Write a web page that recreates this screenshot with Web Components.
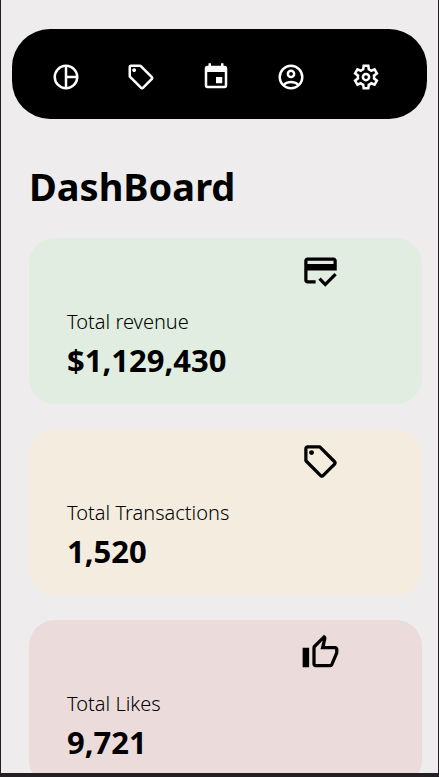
<!DOCTYPE html>
<html lang="en">
<head>
<meta charset="utf-8">
<meta name="viewport" content="width=device-width, initial-scale=1">
<title>DashBoard</title>
<style>
  html, body { margin: 0; height: 100%; }
  body { background: #231f24; color: #000; font-family: "Noto Sans", "Open Sans", sans-serif; overflow: hidden; }
</style>
</head>
<body>
<dash-app></dash-app>
<script>
const ICONS = {
  pie: '<path d="M12 2a10 10 0 1 0 0 20 10 10 0 0 0 0-20zm1 2.07A8 8 0 0 1 19.93 11H13V4.07zM4 12a8 8 0 0 1 7-7.93v15.86A8 8 0 0 1 4 12zm9 7.93V13h6.93A8 8 0 0 1 13 19.93z"/>',
  tag: '<g transform="translate(0 24) scale(.025)"><path d="M856-390 570-104q-12 12-27 18t-30 6q-15 0-30-6t-27-18L103-457q-11-11-17-25.5T80-513v-287q0-33 23.5-56.5T160-880h287q16 0 31 6.5t26 17.5l352 353q12 12 17.5 27t5.5 30q0 15-5.5 29.5T856-390ZM513-160l286-286-353-354H160v286l353 354ZM260-640q25 0 42.5-17.5T320-700q0-25-17.5-42.5T260-760q-25 0-42.5 17.5T200-700q0 25 17.5 42.5T260-640Z"/></g>',
  event: '<path d="M19 3h-1V1h-2v2H8V1H6v2H5c-1.1 0-2 .9-2 2v14c0 1.1.9 2 2 2h14c1.1 0 2-.9 2-2V5c0-1.1-.9-2-2-2zm0 16H5V8h14v11zM12 12h5v5h-5z"/>',
  account: '<g transform="translate(0 24) scale(.025)"><path d="M234-276q51-39 114-61.5T480-360q69 0 132 22.5T726-276q35-41 54.5-93T800-480q0-133-93.5-226.5T480-800q-133 0-226.5 93.5T160-480q0 59 19.5 111t54.5 93Zm246-164q-59 0-99.5-40.5T340-580q0-59 40.5-99.5T480-720q59 0 99.5 40.5T620-580q0 59-40.5 99.5T480-440Zm0 360q-83 0-156-31.5T197-197q-54-54-85.5-127T80-480q0-83 31.5-156T197-763q54-54 127-85.5T480-880q83 0 156 31.5T763-763q54 54 85.5 127T880-480q0 83-31.5 156T763-197q-54 54-127 85.5T480-80Zm0-80q53 0 100-15.5t86-44.5q-39-29-86-44.5T480-280q-53 0-100 15.5T294-220q39 29 86 44.5T480-160Zm0-360q26 0 43-17t17-43q0-26-17-43t-43-17q-26 0-43 17t-17 43q0 26 17 43t43 17Z"/></g>',
  settings: '<g transform="translate(0 24) scale(.025)"><path d="m370-80-16-128q-13-5-24.5-12T307-235l-119 50L78-375l103-78q-1-7-1-13.5v-27q0-6.5 1-13.5L78-585l110-190 119 50q11-8 23-15t24-12l16-128h220l16 128q13 5 24.5 12t22.5 15l119-50 110 190-103 78q1 7 1 13.5v27q0 6.5-2 13.5l103 78-110 190-118-50q-11 8-23 15t-24 12L590-80H370Zm70-80h79l14-106q31-8 57.5-23.5T639-327l99 41 39-68-86-65q5-14 7-29.5t2-31.5q0-16-2-31.5t-7-29.5l86-65-39-68-99 42q-22-23-48.5-38.5T533-694l-13-106h-79l-14 106q-31 8-57.5 23.5T321-633l-99-41-39 68 86 64q-5 15-7 30t-2 32q0 16 2 31t7 30l-86 65 39 68 99-42q22 23 48.5 38.5T427-266l13 106Z"/><circle cx="480" cy="-480" r="100" fill="none" stroke="currentColor" stroke-width="80"/></g>',
  credit: '<path d="M20 4H4c-1.11 0-1.99.89-1.99 2L2 18c0 1.11.89 2 2 2h5v-2H4v-6h18V6c0-1.11-.89-2-2-2zm0 4H4V6h16v2zm-5.07 11.17-2.83-2.83-1.41 1.41L14.93 22 22 14.93l-1.41-1.41-5.66 5.65z"/>',
  like: '<path d="M9 21h9c.83 0 1.54-.5 1.84-1.22l3.02-7.05c.09-.23.14-.47.14-.73v-2c0-1.1-.9-2-2-2h-6.31l.95-4.57.03-.32c0-.41-.17-.79-.44-1.06L14.17 1 7.58 7.59C7.22 7.95 7 8.45 7 9v10c0 1.1.9 2 2 2zM9 9l4.34-4.34L12 10h9v2l-3 7H9V9zM1 9h4v12H1z"/>'
};

class DashElement extends HTMLElement {
  connectedCallback() {
    if (!this.shadowRoot) this.attachShadow({ mode: "open" }).innerHTML = this.render();
  }
}

customElements.define("dash-icon", class extends DashElement {
  render() {
    return `<style>
      :host { display: block; width: 30px; height: 30px; }
      svg { display: block; width: 100%; height: 100%; fill: currentColor; }
    </style><svg viewBox="0 0 24 24" aria-hidden="true">${ICONS[this.getAttribute("name")]}</svg>`;
  }
});

customElements.define("dash-nav", class extends DashElement {
  render() {
    const items = [["pie", "Dashboard"], ["tag", "Transactions"], ["event", "Schedules"], ["account", "Users"], ["settings", "Settings"]];
    return `<style>
      :host { display: block; margin: 0 11px; }
      nav { display: flex; justify-content: space-between; padding: 33px 46px 27px 39px; border-radius: 38px; background: #000; }
      a { display: block; color: #fff; }
    </style><nav aria-label="Main">${items.map(([icon, label]) =>
      `<a href="#${icon}" aria-label="${label}"><dash-icon name="${icon}"></dash-icon></a>`).join("")}</nav>`;
  }
});

customElements.define("stat-card", class extends DashElement {
  render() {
    return `<style>
      :host { display: block; box-sizing: border-box; min-height: 166px; padding: 13px 82px 22px 38px; border-radius: 26px; background: var(--card-color); }
      dash-icon { width: 39px; height: 39px; margin-left: auto; }
      .label { margin-top: 19px; font-size: 20px; line-height: 26px; font-weight: 300; }
      .value { margin-top: 4px; font-size: 31px; line-height: 42px; font-weight: 700; }
    </style>
    <dash-icon name="${this.getAttribute("icon")}"></dash-icon>
    <div class="label"><slot name="label"></slot></div>
    <div class="value"><slot></slot></div>`;
  }
});

customElements.define("dash-app", class extends DashElement {
  render() {
    return `<style>
      :host { display: block; box-sizing: border-box; height: 100vh; padding: 0 1px 4px; }
      .page { box-sizing: border-box; height: 100%; padding-top: 29px; overflow-y: auto; scrollbar-width: none; background: #eeecec; }
      h1 { margin: 40px 28px 24px; font-size: 38px; line-height: 55px; font-weight: 700; }
      .cards { display: grid; gap: 25px; padding: 0 16px 32px 28px; }
      .green { --card-color: #e0ede0; }
      .cream { --card-color: #f4ecdf; }
      .pink { --card-color: #ebdcdb; }
    </style>
    <div class="page">
      <dash-nav></dash-nav>
      <main>
        <h1>DashBoard</h1>
        <section class="cards">
          <stat-card class="green" icon="credit"><span slot="label">Total revenue</span>$1,129,430</stat-card>
          <stat-card class="cream" icon="tag"><span slot="label">Total Transactions</span>1,520</stat-card>
          <stat-card class="pink" icon="like"><span slot="label">Total Likes</span>9,721</stat-card>
        </section>
      </main>
    </div>`;
  }
});
</script>
</body>
</html>
